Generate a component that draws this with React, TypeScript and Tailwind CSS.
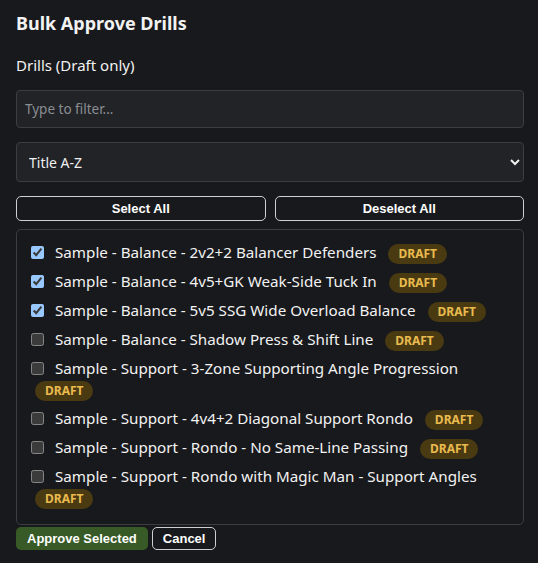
import React, { useState } from "react";

const drills = [
  { title: "Sample - Balance - 2v2+2 Balancer Defenders", checked: true },
  { title: "Sample - Balance - 4v5+GK Weak-Side Tuck In", checked: true },
  { title: "Sample - Balance - 5v5 SSG Wide Overload Balance", checked: true },
  { title: "Sample - Balance - Shadow Press & Shift Line", checked: false },
  { title: "Sample - Support - 3-Zone Supporting Angle Progression", checked: false },
  { title: "Sample - Support - 4v4+2 Diagonal Support Rondo", checked: false },
  { title: "Sample - Support - Rondo - No Same-Line Passing", checked: false },
  { title: "Sample - Support - Rondo with Magic Man - Support Angles", checked: false },
];

export default function App() {
  const [checked, setChecked] = useState(drills.map((d) => d.checked));
  return (
    <div className="min-h-screen bg-[#18191c] text-[#f2f2f2] [color-scheme:dark] pl-4 pr-[14px] pt-[10px] font-['Segoe_UI','Noto_Sans',sans-serif]">
      <h2 className="text-[18px] font-bold leading-[26px]">Bulk Approve Drills</h2>
      <div className="mt-[19px] text-[15px] leading-[20px]">Drills (Draft only)</div>
      <input
        className="mt-[15px] block w-full h-[38px] rounded-[4px] border border-[#3a3d42] bg-[#212327] px-[8px] text-[13.5px] text-[#e5e5e5] placeholder:text-[#8a8d92] outline-none"
        placeholder="Type to filter..."
      />
      <select className="mt-[14px] block w-full h-[40px] rounded-[4px] border border-[#3a3d42] bg-[#212327] px-[8px] text-[14px] text-[#f0f0f0] outline-none">
        <option>Title A-Z</option>
        <option>Title Z-A</option>
      </select>
      <div className="mt-[14px] grid grid-cols-2 gap-[9px]">
        <button className="h-[25px] rounded-[5px] border border-[#cfcfcf] bg-[#18191c] text-[13px] font-bold text-white font-['Liberation_Sans',Arial,sans-serif]">
          Select All
        </button>
        <button className="h-[25px] rounded-[5px] border border-[#cfcfcf] bg-[#18191c] text-[13px] font-bold text-white font-['Liberation_Sans',Arial,sans-serif]">
          Deselect All
        </button>
      </div>
      <div className="mt-[8px] h-[296px] overflow-auto rounded-[5px] border border-[#3a3d42] pl-[10px] pr-[10px] pt-[8px]">
        {drills.map((d, i) => (
          <label key={i} className="block py-[4px] text-[15.2px] leading-[21px]">
            <input
              type="checkbox"
              checked={checked[i]}
              onChange={() => setChecked((c) => c.map((v, j) => (j === i ? !v : v)))}
              className="ml-[4px] mr-[11px] align-[-1px] w-[13px] h-[13px]"
            />
            {d.title}{" "}
            <span className="relative top-[2px] ml-[8px] inline-block rounded-full bg-[#4a3a12] px-[10px] text-[12px] font-bold leading-[20px] text-[#e9bb4e] align-top">
              DRAFT
            </span>
          </label>
        ))}
      </div>
      <div className="mt-[2px] flex gap-[4px]">
        <button className="h-[23px] rounded-[5px] bg-[#385a27] px-[11px] text-[13px] font-bold text-white font-['Liberation_Sans',Arial,sans-serif]">
          Approve Selected
        </button>
        <button className="h-[23px] rounded-[5px] border border-[#cfcfcf] bg-[#18191c] px-[10px] text-[13px] font-bold text-white font-['Liberation_Sans',Arial,sans-serif]">
          Cancel
        </button>
      </div>
    </div>
  );
}
